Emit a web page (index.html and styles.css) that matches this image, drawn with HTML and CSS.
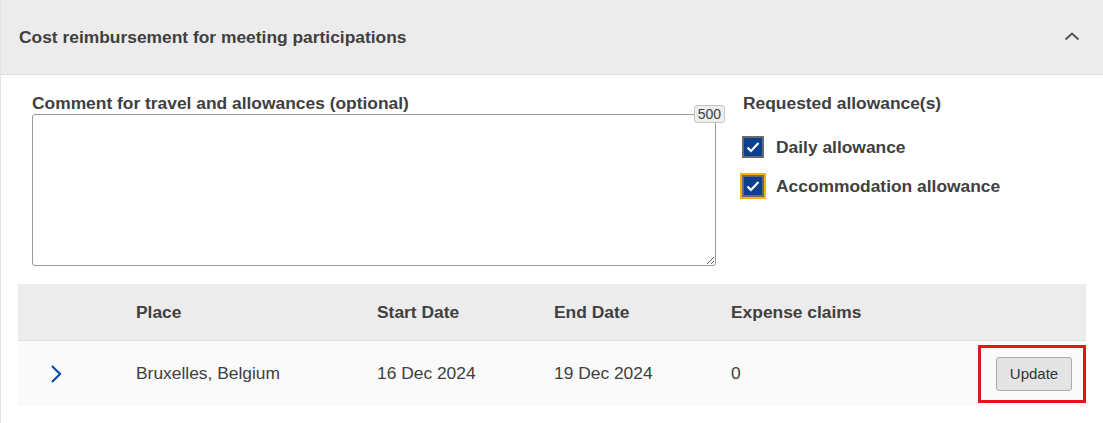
FILE: index.html
```html
<!DOCTYPE html>
<html lang="en">
<head>
    <meta charset="UTF-8">
    <meta name="viewport" content="width=device-width, initial-scale=1.0">
    <title>Cost reimbursement</title>
    <link rel="stylesheet" href="styles.css">
</head>
<body>
    <div class="panel">
        <div class="panel-header">
            <h2 class="panel-title">Cost reimbursement for meeting participations</h2>
            <svg class="collapse" width="16" height="10" viewBox="0 0 16 10">
                <polyline points="1.5,8.5 8,2.5 14.5,8.5" fill="none" stroke="#555" stroke-width="2"/>
            </svg>
        </div>
        <div class="panel-body">
            <div class="form-row">
                <div class="comment">
                    <label class="field-label" for="comment">Comment for travel and allowances (optional)</label>
                    <div class="textarea-wrap">
                        <textarea id="comment" maxlength="500"></textarea>
                        <span class="counter">500</span>
                    </div>
                </div>
                <div class="allowances">
                    <div class="field-label">Requested allowance(s)</div>
                    <label class="check">
                        <span class="box">
                            <svg width="14" height="12" viewBox="0 0 14 12"><polyline points="1.5,6.5 5,10 12.5,2" fill="none" stroke="#fff" stroke-width="2.2"/></svg>
                        </span>
                        Daily allowance
                    </label>
                    <label class="check">
                        <span class="box focused">
                            <svg width="14" height="12" viewBox="0 0 14 12"><polyline points="1.5,6.5 5,10 12.5,2" fill="none" stroke="#fff" stroke-width="2.2"/></svg>
                        </span>
                        Accommodation allowance
                    </label>
                </div>
            </div>

            <div class="table">
                <div class="row head">
                    <div></div>
                    <div>Place</div>
                    <div>Start Date</div>
                    <div>End Date</div>
                    <div>Expense claims</div>
                    <div></div>
                </div>
                <div class="row item">
                    <div class="expand">
                        <svg width="12" height="20" viewBox="0 0 12 20"><polyline points="2,2 10,10 2,18" fill="none" stroke="#0b4ea2" stroke-width="2.2"/></svg>
                    </div>
                    <div>Bruxelles, Belgium</div>
                    <div>16 Dec 2024</div>
                    <div>19 Dec 2024</div>
                    <div>0</div>
                    <div class="action">
                        <div class="highlight">
                            <button type="button" class="btn">Update</button>
                        </div>
                    </div>
                </div>
            </div>
        </div>
    </div>
</body>
</html>
```

FILE: styles.css
```css
body{
    margin: 0;
    background-color: white;
    font-family: "Liberation Sans", Arial, sans-serif;
    color: #404040;
    overflow: hidden;
}
.panel{
    width: 1120px;
    border-left: 1px solid #e3e3e3;
}
.panel-header{
    height: 74px;
    background-color: #ececec;
    border-bottom: 1px solid #dcdcdc;
    display: flex;
    align-items: center;
    justify-content: space-between;
    padding: 0 18px;
    width: 1067px;
}
.panel-title{
    margin: 0;
    font-size: 17.4px;
    font-weight: bold;
    color: #404040;
}
.collapse{
    margin-right: 6px;
    margin-top: -2px;
}
.panel-body{
    width: 1068px;
    padding: 18px 17px 17px 17px;
}
.form-row{
    display: grid;
    grid-template-columns: 684px 1fr;
    gap: 27px;
    padding-left: 14px;
}
.field-label{
    display: block;
    font-size: 17.4px;
    font-weight: bold;
    line-height: 21px;
}
.textarea-wrap{
    position: relative;
}
textarea{
    display: block;
    box-sizing: border-box;
    width: 684px;
    height: 152px;
    border: 1px solid #9a9a9a;
    border-radius: 3px;
    font-family: inherit;
}
.counter{
    position: absolute;
    top: -9px;
    right: -9px;
    background-color: #eeeeee;
    border: 1px solid #c4c4c4;
    border-radius: 3px;
    font-size: 14px;
    line-height: 16px;
    padding: 0 3px;
    color: #404040;
}
.allowances{
    display: flex;
    flex-direction: column;
}
.check{
    display: flex;
    align-items: center;
    gap: 12px;
    font-size: 17.4px;
    font-weight: bold;
    margin-top: 22px;
    margin-left: -1px;
}
.check + .check{
    margin-top: 17px;
}
.box{
    box-sizing: border-box;
    width: 22px;
    height: 22px;
    background-color: #0b3f8f;
    border: 2px solid #6a6a6a;
    display: flex;
    align-items: center;
    justify-content: center;
}
.box.focused{
    outline: 2px solid #f4b400;
}
.table{
    margin-top: 18px;
    font-size: 17.4px;
}
.row{
    display: grid;
    grid-template-columns: 118px 241px 177px 177px 247px 108px;
    align-items: center;
}
.head{
    height: 56px;
    background-color: #ececec;
    border-bottom: 1px solid #e0e0e0;
    font-weight: bold;
}
.item{
    height: 65px;
    background-color: #fafafa;
}
.expand{
    padding-left: 32px;
    display: flex;
    align-items: center;
}
.action{
    display: flex;
    align-items: center;
}
.highlight{
    border: 3px solid #e3141c;
    padding: 9px 11px 9px 15px;
    width: 76px;
}
.btn{
    width: 76px;
    height: 34px;
    background-color: #e4e4e4;
    border: 1px solid #ababab;
    border-radius: 3px;
    font-family: inherit;
    font-size: 15px;
    color: #333333;
}
```
